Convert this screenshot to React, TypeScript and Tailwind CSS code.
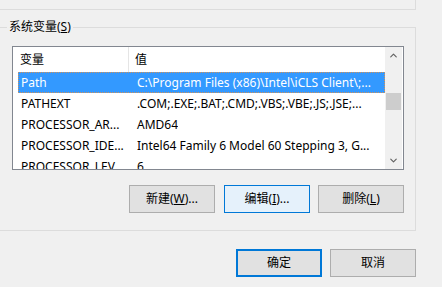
import { ChevronUp, ChevronDown } from 'lucide-react';

const rows = [
  { name: 'Path', value: 'C:\\Program Files (x86)\\Intel\\iCLS Client\\;...', selected: true },
  { name: 'PATHEXT', value: '.COM;.EXE;.BAT;.CMD;.VBS;.VBE;.JS;.JSE;...' },
  { name: 'PROCESSOR_AR...', value: 'AMD64' },
  { name: 'PROCESSOR_IDE...', value: 'Intel64 Family 6 Model 60 Stepping 3, G...' },
  { name: 'PROCESSOR_LEV...', value: '6' },
];

const Btn = ({ children, focused, primary }: { children: React.ReactNode; focused?: boolean; primary?: boolean }) => (
  <button
    className={
      'w-[86px] h-[28px] flex items-center justify-center text-[12px] text-black ' +
      (primary
        ? 'border-2 border-[#0078d7] bg-[#e1e1e1]'
        : focused
        ? 'border border-[#0078d7] bg-[#e5f1fb]'
        : 'border border-[#adadad] bg-[#e1e1e1]')
    }
  >
    {children}
  </button>
);

const App = () => {
  return (
    <div
      className="w-[442px] h-[287px] bg-[#f0f0f0] overflow-hidden text-[12px] text-black"
      style={{ fontFamily: '"Noto Sans", "Noto Sans CJK SC", sans-serif' }}
    >
      {/* previous group box (bottom edge) */}
      <div className="h-[10px] w-[418px] -ml-[2px] border-r border-b border-[#dcdcdc]" />

      {/* 系统变量 group box */}
      <div className="relative mt-[17px] w-[418px] h-[204px] -ml-[2px] border border-[#dcdcdc] pl-[13px] pt-[18px]">
        <span className="absolute -top-[10px] left-[8px] px-[2px] bg-[#f0f0f0] leading-[18px]">
          系统变量(<span className="underline">S</span>)
        </span>

        <div className="w-[392px] h-[124px] border border-[#828790] bg-white flex overflow-hidden">
          <div className="flex-1 min-w-0">
            {/* header */}
            <div className="flex h-[25px] items-center">
              <div className="w-[116px] pl-[7px] h-full flex items-center border-r border-[#e5e5e5]">变量</div>
              <div className="pl-[6px]">值</div>
            </div>
            {rows.map((r) => (
              <div
                key={r.name}
                className={
                  'ml-[5px] h-[21px] flex items-center whitespace-nowrap ' +
                  (r.selected
                    ? 'bg-[#3399ff] text-white outline-1 outline-dotted outline-[#d0925a] -outline-offset-1'
                    : '')
                }
              >
                <div className="w-[116px] pl-[3px] overflow-hidden">{r.name}</div>
                <div className="pl-[3px] overflow-hidden">{r.value}</div>
              </div>
            ))}
          </div>

          {/* scrollbar */}
          <div className="w-[17px] mr-[1px] bg-[#f0f0f0] flex flex-col">
            <div className="h-[17px] flex items-center justify-center text-[#606060]">
              <ChevronUp size={11} strokeWidth={2.5} />
            </div>
            <div className="h-[29px]" />
            <div className="h-[17px] mx-[1px] bg-[#cdcdcd]" />
            <div className="flex-1" />
            <div className="h-[17px] flex items-center justify-center text-[#606060]">
              <ChevronDown size={11} strokeWidth={2.5} />
            </div>
          </div>
        </div>

        <div className="mt-[15px] w-[392px] flex justify-end">
          <Btn>
            新建(<span className="underline">W</span>)...
          </Btn>
          <div className="ml-[9px]">
            <Btn focused>
              编辑(<span className="underline">I</span>)...
            </Btn>
          </div>
          <div className="ml-[8px]">
            <Btn>
              删除(<span className="underline">L</span>)
            </Btn>
          </div>
        </div>
      </div>

      <div className="mt-[18px] w-[416px] flex justify-end gap-[8px]">
        <Btn primary>确定</Btn>
        <Btn>取消</Btn>
      </div>
    </div>
  );
};

export default App;
